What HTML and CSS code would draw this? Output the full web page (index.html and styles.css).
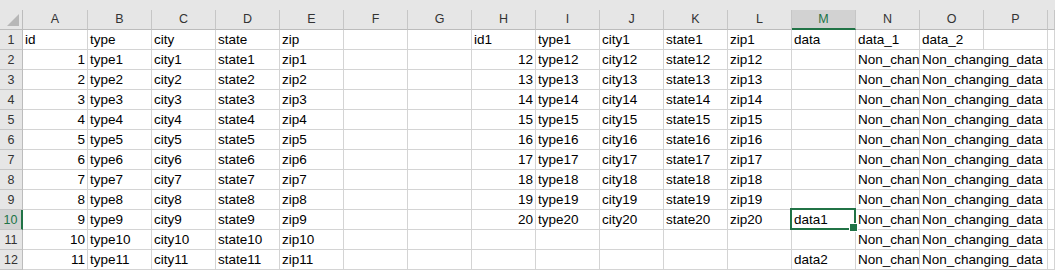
FILE: index.html
```html
<!DOCTYPE html>
<html lang="en">
<head>
<meta charset="utf-8">
<title>Sheet1</title>
<link rel="stylesheet" href="styles.css">
</head>
<body>
<div class="sheet">
  <!-- column headers -->
  <div class="ch corner"><span><i class="tri"></i></span></div>
  <div class="ch"><span>A</span></div>
  <div class="ch"><span>B</span></div>
  <div class="ch"><span>C</span></div>
  <div class="ch"><span>D</span></div>
  <div class="ch"><span>E</span></div>
  <div class="ch"><span>F</span></div>
  <div class="ch"><span>G</span></div>
  <div class="ch"><span>H</span></div>
  <div class="ch"><span>I</span></div>
  <div class="ch"><span>J</span></div>
  <div class="ch"><span>K</span></div>
  <div class="ch"><span>L</span></div>
  <div class="ch sel"><span>M</span></div>
  <div class="ch"><span>N</span></div>
  <div class="ch"><span>O</span></div>
  <div class="ch"><span>P</span></div>
  <div class="ch"><span></span></div>

  <!-- row 1 -->
  <div class="rh">1</div>
  <div class="c">id</div><div class="c">type</div><div class="c">city</div><div class="c">state</div><div class="c">zip</div><div class="c"></div><div class="c"></div>
  <div class="c">id1</div><div class="c">type1</div><div class="c">city1</div><div class="c">state1</div><div class="c">zip1</div>
  <div class="c">data</div><div class="c">data_1</div><div class="c">data_2</div><div class="c"></div><div class="c"></div>

  <!-- row 2 -->
  <div class="rh">2</div>
  <div class="c n">1</div><div class="c">type1</div><div class="c">city1</div><div class="c">state1</div><div class="c">zip1</div><div class="c"></div><div class="c"></div>
  <div class="c n">12</div><div class="c">type12</div><div class="c">city12</div><div class="c">state12</div><div class="c">zip12</div>
  <div class="c"></div><div class="c">Non_changing_data</div><div class="c spill">Non_changing_data</div><div class="c"></div><div class="c"></div>

  <!-- row 3 -->
  <div class="rh">3</div>
  <div class="c n">2</div><div class="c">type2</div><div class="c">city2</div><div class="c">state2</div><div class="c">zip2</div><div class="c"></div><div class="c"></div>
  <div class="c n">13</div><div class="c">type13</div><div class="c">city13</div><div class="c">state13</div><div class="c">zip13</div>
  <div class="c"></div><div class="c">Non_changing_data</div><div class="c spill">Non_changing_data</div><div class="c"></div><div class="c"></div>

  <!-- row 4 -->
  <div class="rh">4</div>
  <div class="c n">3</div><div class="c">type3</div><div class="c">city3</div><div class="c">state3</div><div class="c">zip3</div><div class="c"></div><div class="c"></div>
  <div class="c n">14</div><div class="c">type14</div><div class="c">city14</div><div class="c">state14</div><div class="c">zip14</div>
  <div class="c"></div><div class="c">Non_changing_data</div><div class="c spill">Non_changing_data</div><div class="c"></div><div class="c"></div>

  <!-- row 5 -->
  <div class="rh">5</div>
  <div class="c n">4</div><div class="c">type4</div><div class="c">city4</div><div class="c">state4</div><div class="c">zip4</div><div class="c"></div><div class="c"></div>
  <div class="c n">15</div><div class="c">type15</div><div class="c">city15</div><div class="c">state15</div><div class="c">zip15</div>
  <div class="c"></div><div class="c">Non_changing_data</div><div class="c spill">Non_changing_data</div><div class="c"></div><div class="c"></div>

  <!-- row 6 -->
  <div class="rh">6</div>
  <div class="c n">5</div><div class="c">type5</div><div class="c">city5</div><div class="c">state5</div><div class="c">zip5</div><div class="c"></div><div class="c"></div>
  <div class="c n">16</div><div class="c">type16</div><div class="c">city16</div><div class="c">state16</div><div class="c">zip16</div>
  <div class="c"></div><div class="c">Non_changing_data</div><div class="c spill">Non_changing_data</div><div class="c"></div><div class="c"></div>

  <!-- row 7 -->
  <div class="rh">7</div>
  <div class="c n">6</div><div class="c">type6</div><div class="c">city6</div><div class="c">state6</div><div class="c">zip6</div><div class="c"></div><div class="c"></div>
  <div class="c n">17</div><div class="c">type17</div><div class="c">city17</div><div class="c">state17</div><div class="c">zip17</div>
  <div class="c"></div><div class="c">Non_changing_data</div><div class="c spill">Non_changing_data</div><div class="c"></div><div class="c"></div>

  <!-- row 8 -->
  <div class="rh">8</div>
  <div class="c n">7</div><div class="c">type7</div><div class="c">city7</div><div class="c">state7</div><div class="c">zip7</div><div class="c"></div><div class="c"></div>
  <div class="c n">18</div><div class="c">type18</div><div class="c">city18</div><div class="c">state18</div><div class="c">zip18</div>
  <div class="c"></div><div class="c">Non_changing_data</div><div class="c spill">Non_changing_data</div><div class="c"></div><div class="c"></div>

  <!-- row 9 -->
  <div class="rh">9</div>
  <div class="c n">8</div><div class="c">type8</div><div class="c">city8</div><div class="c">state8</div><div class="c">zip8</div><div class="c"></div><div class="c"></div>
  <div class="c n">19</div><div class="c">type19</div><div class="c">city19</div><div class="c">state19</div><div class="c">zip19</div>
  <div class="c"></div><div class="c">Non_changing_data</div><div class="c spill">Non_changing_data</div><div class="c"></div><div class="c"></div>

  <!-- row 10 (active row) -->
  <div class="rh sel">10</div>
  <div class="c n">9</div><div class="c">type9</div><div class="c">city9</div><div class="c">state9</div><div class="c">zip9</div><div class="c"></div><div class="c"></div>
  <div class="c n">20</div><div class="c">type20</div><div class="c">city20</div><div class="c">state20</div><div class="c">zip20</div>
  <div class="c active">data1</div><div class="c">Non_changing_data</div><div class="c spill">Non_changing_data</div><div class="c"></div><div class="c"></div>

  <!-- row 11 -->
  <div class="rh">11</div>
  <div class="c n">10</div><div class="c">type10</div><div class="c">city10</div><div class="c">state10</div><div class="c">zip10</div><div class="c"></div><div class="c"></div>
  <div class="c"></div><div class="c"></div><div class="c"></div><div class="c"></div><div class="c"></div>
  <div class="c"></div><div class="c">Non_changing_data</div><div class="c spill">Non_changing_data</div><div class="c"></div><div class="c"></div>

  <!-- row 12 -->
  <div class="rh">12</div>
  <div class="c n">11</div><div class="c">type11</div><div class="c">city11</div><div class="c">state11</div><div class="c">zip11</div><div class="c"></div><div class="c"></div>
  <div class="c"></div><div class="c"></div><div class="c"></div><div class="c"></div><div class="c"></div>
  <div class="c">data2</div><div class="c">Non_changing_data</div><div class="c spill">Non_changing_data</div><div class="c"></div><div class="c"></div>
</div>
</body>
</html>
```

FILE: styles.css
```css
* {
  box-sizing: border-box;
}

html, body {
  margin: 0;
  background: #ffffff;
}

body {
  font-family: "Liberation Sans", Arial, sans-serif;
  color: #000;
  overflow: hidden;
}

.sheet {
  display: grid;
  grid-template-columns: 23px 65px repeat(15, 64px) 1fr;
  grid-template-rows: 30px repeat(12, 20px);
  width: 1055px;
}

/* column header strip */
.ch {
  background: #e6e6e6;
  padding-top: 10px;
}

.ch span {
  display: block;
  height: 20px;
  border-right: 1px solid #c6c6c6;
  border-bottom: 1px solid #bcbcbc;
  text-align: center;
  font-size: 12.5px;
  line-height: 19px;
  color: #333;
}

.ch.sel span {
  background: #d2d2d2;
  color: #217346;
  border-bottom: 2px solid #217346;
}

.corner span {
  position: relative;
  border-right-color: #bcbcbc;
}

.tri {
  position: absolute;
  right: 3px;
  bottom: 3px;
  width: 0;
  height: 0;
  border-left: 12px solid transparent;
  border-bottom: 12px solid #b7b7b7;
}

/* row headers */
.rh {
  background: #e6e6e6;
  border-right: 1px solid #bcbcbc;
  border-bottom: 1px solid #c6c6c6;
  text-align: center;
  font-size: 12.5px;
  line-height: 19px;
  padding-top: 1px;
  color: #333;
}

.rh.sel {
  background: #d2d2d2;
  color: #217346;
  border-right: 2px solid #217346;
}

/* cells */
.c {
  border-right: 1px solid #d4d4d4;
  border-bottom: 1px solid #d4d4d4;
  padding: 0 2px;
  font-size: 13.5px;
  line-height: 19px;
  white-space: nowrap;
  overflow: hidden;
}

.c.n {
  text-align: right;
}

/* text that runs on into the empty neighbour */
.c.spill {
  overflow: visible;
  border-right-color: transparent;
}

/* active cell frame and fill handle */
.c.active {
  position: relative;
  overflow: visible;
}

.c.active::before {
  content: "";
  position: absolute;
  left: -2px;
  top: -2px;
  right: -1px;
  bottom: -1px;
  border: 2px solid #217346;
}

.c.active::after {
  content: "";
  position: absolute;
  right: -3px;
  bottom: -3px;
  width: 7px;
  height: 7px;
  background: #217346;
  border: 1px solid #ffffff;
}
```
